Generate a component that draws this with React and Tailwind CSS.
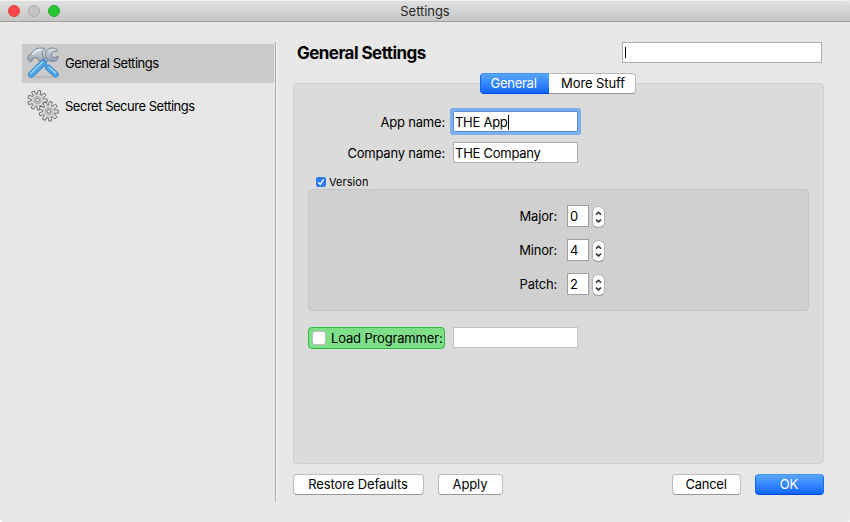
import React from "react";

function ToolsIcon() {
  return (
    <svg className="mb-[2px] block h-8 w-8 shrink-0" viewBox="0 0 32 32">
      <defs>
        <linearGradient id="steel" x1="0" y1="0" x2="0" y2="1">
          <stop offset="0" stopColor="#dde3ea" />
          <stop offset="1" stopColor="#8b9aac" />
        </linearGradient>
      </defs>
      <ellipse cx="16" cy="30" rx="13" ry="1.300" fill="#000" opacity=".08" />
      <path d="M20 11.500L17 14.500" stroke="#75849a" strokeWidth="5" />
      <path d="M20 11.500L17 14.500" stroke="#b4bfcc" strokeWidth="3.400" />
      <path d="M30.300 4.200l-3.600.3-2.400 2 .3 2.900 2.600 1.300 4-1.600c.2 2.700-1.500 4.600-4.100 5.100-3 .5-5.600-.3-7.300-2.300-1.600-2-1.900-5-.6-7.400 1.200-2.200 3.600-3.600 6.200-3.500 1.900 0 4 .8 4.900 1.800z" fill="url(#steel)" stroke="#6e7d90" strokeWidth=".9" />
      <path d="M21 20.500l7.600 7" stroke="#2a7cc4" strokeWidth="6" strokeLinecap="round" />
      <path d="M21 20.500l7.600 7" stroke="#4ba5ea" strokeWidth="4.500" strokeLinecap="round" />
      <path d="M22 19.900l6.600 6" stroke="#a0d6f8" strokeWidth="1.300" strokeLinecap="round" />
      <path d="M.8 11.800l.4-3 3-1.900C6 3.600 9 1.300 12.500 1l3.500.1 2.200 1.300c-2.700.9-3.700 2.400-3 4.700l2 5.200-3.600 3.300-4.100-5-3.600.6-1 2.600-2 .8z" fill="url(#steel)" stroke="#6e7d90" strokeWidth=".9" />
      <path d="M5.500 7.600C7.500 4.700 10 3 13.500 2.500" fill="none" stroke="#f4f6f8" strokeWidth="1.200" />
      <path d="M16.600 15.500L4.300 27.500" stroke="#2a7cc4" strokeWidth="6.400" strokeLinecap="round" />
      <path d="M16.600 15.500L4.300 27.500" stroke="#4ba5ea" strokeWidth="4.900" strokeLinecap="round" />
      <path d="M15.600 14.800L3.700 26.400" stroke="#a0d6f8" strokeWidth="1.400" strokeLinecap="round" />
    </svg>
  );
}

function Gear({ cx, cy }) {
  const teeth = [0, 40, 80, 120, 160, 200, 240, 280, 320];
  return (
    <g transform={`translate(${cx} ${cy}) rotate(12)`}>
      {teeth.map((a) => (
        <path key={a} transform={`rotate(${a})`} d="M-1.700 -5.800l.3-4h2.800l.3 4" fill="#e2e2e2" stroke="#6a6a6a" strokeWidth=".9" />
      ))}
      <circle r="6.300" fill="#d8d8d8" stroke="#747474" strokeWidth=".8" />
      {teeth.map((a) => (
        <path key={a} transform={`rotate(${a})`} d="M-1 -5.500h2v-2.200h-2z" fill="#dcdcdc" />
      ))}
      <circle r="3.600" fill="#c6c6c6" stroke="#a0a0a0" strokeWidth=".7" />
      <circle r="1.800" fill="#f0f0f0" stroke="#777" strokeWidth=".9" />
    </g>
  );
}

function GearsIcon() {
  return (
    <svg className="mb-[2px] block h-8 w-8 shrink-0" viewBox="0 0 32 32">
      <Gear cx={10.500} cy={10.200} />
      <Gear cx={21.800} cy={21.300} />
    </svg>
  );
}

function Button({ className, children }) {
  return (
    <button className={`flex h-[21px] items-center justify-center rounded-[4px] border border-[#bcbcbc] border-b-[#989898] bg-white pr-px pb-[2px] ${className}`}>
      {children}
    </button>
  );
}

function VersionRow({ label, value }) {
  return (
    <div className="flex h-[22px]">
      <div className="flex w-[248px] items-center justify-end leading-none">
        <span className="tracking-[-0.200px]">{label}</span>
      </div>
      <div className="ml-[10px] flex h-[22px] w-[22px] items-center border border-[#9f9f9f] bg-white pl-[2px]">{value}</div>
      <div className="mt-px ml-[3px] flex h-[22px] w-[13px] items-center justify-center rounded-[6px] border border-[#b5b5b5] border-b-[#929292] bg-white">
        <svg className="block h-[14px] w-[7px]" viewBox="0 0 7 14" fill="none" stroke="#303030" strokeWidth="1.500">
          <path d="M1 4.600L3.500 2.300 6 4.600M1 9.600l2.500 2.300L6 9.600" />
        </svg>
      </div>
    </div>
  );
}

export default function App() {
  return (
    <div className="flex h-[522px] w-[850px] flex-col overflow-hidden rounded-b-[4px] bg-[#e7e7e7] font-['Inter','Liberation_Sans',sans-serif] text-[13px] leading-4 text-black">
      <header className="grid h-[22px] shrink-0 grid-cols-[1fr_auto_1fr] items-center rounded-t-[4px] border-t border-b border-t-[#f3f3f3] border-b-[#a0a0a0] bg-gradient-to-b from-[#e0e0e0] to-[#c6c6c6]">
        <div className="flex gap-2 pl-2">
          <span className="h-3 w-3 rounded-full border border-[#e33e3c] bg-[#fc4848]" />
          <span className="h-3 w-3 rounded-full border border-[#aaa] bg-[#c5c5c5]" />
          <span className="h-3 w-3 rounded-full border border-[#25a52c] bg-[#27c732]" />
        </div>
        <h1 className="tracking-[-0.050px] text-[#272727]">Settings</h1>
      </header>

      <div className="flex h-[500px]">
        <nav className="ml-[22px] flex w-[252px] flex-col gap-1 pt-[22px]">
          <div className="flex h-[39px] items-center gap-[6px] bg-[#cacaca] pl-[5px]">
            <ToolsIcon />
            <span className="pb-px tracking-[-0.480px]">General Settings</span>
          </div>
          <div className="flex h-[39px] items-center gap-[6px] pl-[5px]">
            <GearsIcon />
            <span className="pb-px tracking-[-0.480px]">Secret Secure Settings</span>
          </div>
        </nav>
        <div className="mt-5 ml-px h-[460px] w-[2px] border-r border-l border-r-[#f6f6f6] border-l-[#aaa]" />

        <main className="ml-4 flex w-[531px] flex-col">
          <div className="mt-5 flex h-[21px] items-center justify-between pr-[2px] pl-1">
            <h2 className="pt-px text-[17px] font-bold tracking-[-0.540px]">General Settings</h2>
            <div className="flex h-[21px] w-[200px] items-center border border-[#adadad] bg-white pl-[2px]">
              <span className="h-[11px] w-px bg-black" />
            </div>
          </div>

          <section className="mt-5 flex h-[381px] flex-col rounded-[4px] border border-[#cfcfcf] bg-[#dbdbdb]">
            <div className="-mt-[11px] ml-[186px] flex h-[21px] w-[156px]">
              <div className="flex w-[69px] items-center justify-center rounded-l-[4px] border border-r-0 border-t-[#4396f8] border-b-[#0047e5] border-l-[#1769ee] bg-gradient-to-b from-[#58a5fb] to-[#0d65ff] pr-[3px] pb-[2px] text-white">
                <span className="tracking-[-0.260px]">General</span>
              </div>
              <div className="flex w-[87px] items-center justify-center rounded-r-[4px] border border-l-0 border-[#b9b9b9] border-b-[#969696] bg-white pb-[2px] pl-[2px]">
                <span className="tracking-[-0.100px]">More Stuff</span>
              </div>
            </div>

            <div className="mt-[17px] flex h-[21px] items-center">
              <span className="w-[151px] text-right tracking-[-0.200px]">App name:</span>
              <div className="ml-2 flex h-[21px] w-[125px] items-center rounded-[1px] border border-[#5890d8] bg-white pt-px pl-[1px] ring-3 ring-[#7dafed]">
                <span className="tracking-[-0.270px]">THE App</span>
                <span className="h-[15px] w-px bg-black" />
              </div>
            </div>
            <div className="mt-[10px] flex h-[21px] items-center">
              <span className="w-[151px] text-right tracking-[-0.200px]">Company name:</span>
              <div className="ml-2 flex h-[21px] w-[125px] items-center border border-[#acacac] bg-white pt-px pl-[1px]">
                <span className="tracking-[-0.260px]">THE Company</span>
              </div>
            </div>

            <div className="mt-[13px] ml-[22px] flex h-3 items-center gap-[3px]">
              <span className="flex h-[10px] w-[10px] items-center justify-center rounded-[2px] bg-[#2c7df5]">
                <svg className="block h-2 w-2" viewBox="0 0 8 8" fill="none" stroke="white" strokeWidth="1.300">
                  <path d="M1.200 4.200l2 2.200L6.700 1.300" />
                </svg>
              </span>
              <span className="text-[11px] leading-3 tracking-[0.050px]">Version</span>
            </div>
            <div className="mt-px ml-[14px] flex h-[122px] w-[501px] flex-col gap-3 rounded-[4px] border border-[#c4c4c4] bg-[#d0d0d0] pt-[15px]">
              <VersionRow label="Major:" value="0" />
              <VersionRow label="Minor:" value="4" />
              <VersionRow label="Patch:" value="2" />
            </div>

            <div className="mt-4 ml-[14px] flex gap-2">
              <div className="flex h-[22px] w-[137px] items-center rounded-[4px] border border-[#2fba3e] bg-[#7edf88] pl-[3px]">
                <span className="mr-[5px] h-[14px] w-[14px] shrink-0 rounded-[3px] border border-[#bdbdbd] bg-white" />
                <span className="whitespace-nowrap tracking-[-0.160px]">Load Programmer:</span>
              </div>
              <div className="h-[21px] w-[125px] border border-[#c4c4c4] bg-white" />
            </div>
          </section>

          <footer className="mt-[10px] flex">
            <Button className="w-[131px] tracking-[-0.100px]">Restore Defaults</Button>
            <Button className="ml-[14px] w-[65px] tracking-[-0.100px]">Apply</Button>
            <Button className="ml-auto w-[69px] tracking-[-0.250px]">Cancel</Button>
            <button className="ml-[14px] flex h-[21px] w-[69px] items-center justify-center rounded-[4px] border border-[#1769ee] border-t-[#4396f8] border-b-[#0047e5] bg-gradient-to-b from-[#58a5fb] to-[#0d65ff] pr-px pb-[2px] text-white">OK</button>
          </footer>
        </main>
      </div>
    </div>
  );
}
